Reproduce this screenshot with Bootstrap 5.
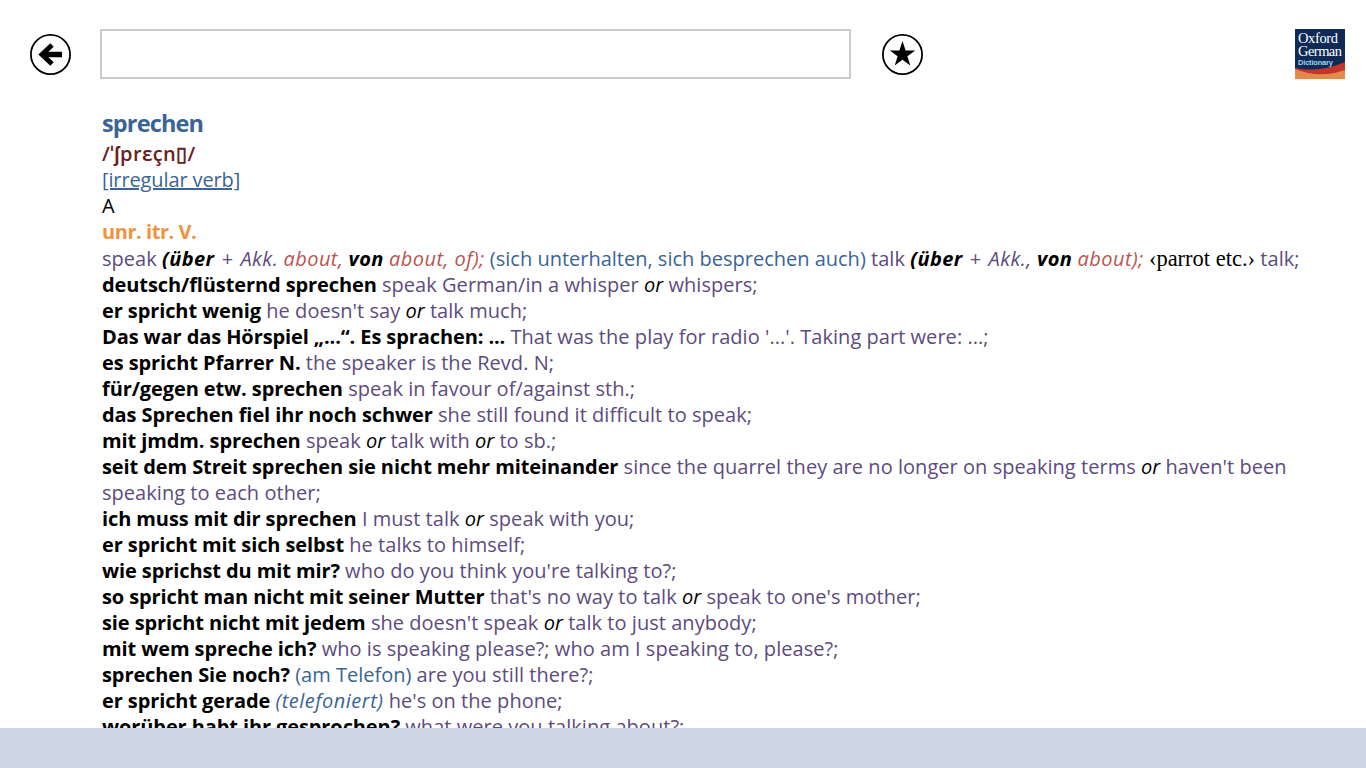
<!DOCTYPE html>
<html lang="en">
<head>
  <meta charset="UTF-8">
  <title>Oxford German Dictionary</title>
  <link rel="stylesheet" href="https://cdn.jsdelivr.net/npm/bootstrap@5.3.0/dist/css/bootstrap.min.css">
  <style>
    body {
        font-family: "Open Sans", "Noto Sans", sans-serif;
        background: #fff;
        overflow: hidden;
    }
    .app-shell { height: 768px; }
    .top-strip { padding: 29px 21px 0 30px; height: 97px; }
    .round-icon { width: 41px; height: 41px; margin-top: 5px; flex: none; }
    .search-box {
        width: 751px;
        height: 50px;
        margin: 0 31px 0 29px;
        border: 2px solid #ccc;
        border-radius: 0;
    }
    .app-logo { width: 50px; height: 50px; }
    .entry-pane {
        height: 631px;
        overflow: hidden;
        padding-left: 102px;
        padding-right: 56px;
        font-size: 20px;
        line-height: 26px;
        letter-spacing: 0.04px;
        color: #5d4b7e;
    }
    .entry-pane b { color: #000; font-weight: 700; letter-spacing: -0.1px; }
    .entry-pane i { letter-spacing: 0.5px; }
    .entry-pane b i { letter-spacing: 0.4px; }
    .headword { font-size: 23.5px; line-height: 32px; font-weight: 700; letter-spacing: -0.85px; color: #3a6494; margin-top: 10px; margin-bottom: 2px; }
    .pron { color: #6b2020; font-weight: 600; letter-spacing: 0.35px; }
    .grammar-link { color: #3a6494; letter-spacing: -0.12px; }
    .plain-black { color: #000; }
    .part-speech { color: #f0933e; font-weight: 700; letter-spacing: -0.45px; }
    .gloss-first { margin-top: 1px; }
    .plus-sign { margin: 0 2px; }
    .note-blue { color: #3a6494; letter-spacing: 0; }
    .note-red { color: #b9544f; font-style: italic; letter-spacing: 0.45px; }
    .subject { color: #000; font-family: "Liberation Serif", serif; font-size: 22.5px; line-height: 20px; letter-spacing: 0; }
    .or-word { color: #000; font-style: italic; }
    .bottom-strip { height: 40px; background: #cdd5e4; }
  </style>
</head>
<body>
<div class="app-shell d-flex flex-column">
  <div class="top-strip d-flex align-items-start">
    <svg class="round-icon" viewBox="0 0 41 41">
      <circle cx="20.5" cy="20.5" r="19.6" fill="none" stroke="#000" stroke-width="1.8"/>
      <path d="M13 20.5 H32" fill="none" stroke="#000" stroke-width="5.5"/>
      <path d="M22 11 L12 20.5 L22 30" fill="none" stroke="#000" stroke-width="5"/>
    </svg>
    <input class="search-box form-control shadow-none" type="text" aria-label="Search">
    <svg class="round-icon" viewBox="0 0 41 41">
      <circle cx="20.5" cy="20.5" r="19.6" fill="none" stroke="#000" stroke-width="1.8"/>
      <path d="M20.5 7 L23.6 16.4 L33.2 16.4 L25.4 22.2 L28.3 31.5 L20.5 25.8 L12.7 31.5 L15.6 22.2 L7.8 16.4 L17.4 16.4 Z" fill="#000"/>
    </svg>
    <svg class="app-logo ms-auto" viewBox="0 0 50 50">
      <rect width="50" height="50" fill="#0f2a55"/>
      <path d="M0 39 Q25 44 50 33 V50 H0 Z" fill="#c2352a"/>
      <path d="M0 40 Q25 50 50 41 V50 H0 Z" fill="#e38a48"/>
      <text x="3" y="14" font-family="Liberation Serif, serif" font-size="14.5" textLength="40" fill="#fff">Oxford</text>
      <text x="3" y="26.5" font-family="Liberation Serif, serif" font-size="14.5" textLength="44" fill="#fff">German</text>
      <text x="3" y="36" font-family="Liberation Sans, sans-serif" font-size="7.5" font-weight="700" textLength="35" fill="#9fd4ee">Dictionary</text>
    </svg>
  </div>
  <div class="entry-pane flex-grow-1">
    <div class="headword">sprechen</div>
    <div class="pron">/ˈʃprɛçn▯/</div>
    <div><a class="grammar-link" href="#">[irregular verb]</a></div>
    <div class="plain-black">A</div>
    <div class="part-speech">unr. itr. V.</div>
    <div class="gloss-first">speak <b><i>(über</i></b> <span class="plus-sign">+</span> <i>Akk.</i> <span class="note-red">about,</span> <b><i>von</i></b> <span class="note-red">about, of);</span> <span class="note-blue">(sich unterhalten, sich besprechen auch)</span> talk <b><i>(über</i></b> <span class="plus-sign">+</span> <i>Akk.,</i> <b><i>von</i></b> <span class="note-red">about);</span> <span class="subject">‹parrot etc.›</span> talk;</div>
    <div><b>deutsch/flüsternd sprechen</b> speak German/in a whisper <span class="or-word">or</span> whispers;</div>
    <div><b>er spricht wenig</b> he doesn't say <span class="or-word">or</span> talk much;</div>
    <div><b>Das war das Hörspiel „...“. Es sprachen: ...</b> That was the play for radio '...'. Taking part were: ...;</div>
    <div><b>es spricht Pfarrer N.</b> the speaker is the Revd. N;</div>
    <div><b>für/gegen etw. sprechen</b> speak in favour of/against sth.;</div>
    <div><b>das Sprechen fiel ihr noch schwer</b> she still found it difficult to speak;</div>
    <div><b>mit jmdm. sprechen</b> speak <span class="or-word">or</span> talk with <span class="or-word">or</span> to sb.;</div>
    <div><b>seit dem Streit sprechen sie nicht mehr miteinander</b> since the quarrel they are no longer on speaking terms <span class="or-word">or</span> haven't been speaking to each other;</div>
    <div><b>ich muss mit dir sprechen</b> I must talk <span class="or-word">or</span> speak with you;</div>
    <div><b>er spricht mit sich selbst</b> he talks to himself;</div>
    <div><b>wie sprichst du mit mir?</b> who do you think you're talking to?;</div>
    <div><b>so spricht man nicht mit seiner Mutter</b> that's no way to talk <span class="or-word">or</span> speak to one's mother;</div>
    <div><b>sie spricht nicht mit jedem</b> she doesn't speak <span class="or-word">or</span> talk to just anybody;</div>
    <div><b>mit wem spreche ich?</b> who is speaking please?; who am I speaking to, please?;</div>
    <div><b>sprechen Sie noch?</b> <span class="note-blue">(am Telefon)</span> are you still there?;</div>
    <div><b>er spricht gerade</b> <span class="note-blue"><i>(telefoniert)</i></span> he's on the phone;</div>
    <div><b>worüber habt ihr gesprochen?</b> what were you talking about?;</div>
  </div>
  <div class="bottom-strip"></div>
</div>
<script src="https://cdn.jsdelivr.net/npm/bootstrap@5.3.0/dist/js/bootstrap.bundle.min.js"></script>
</body>
</html>
